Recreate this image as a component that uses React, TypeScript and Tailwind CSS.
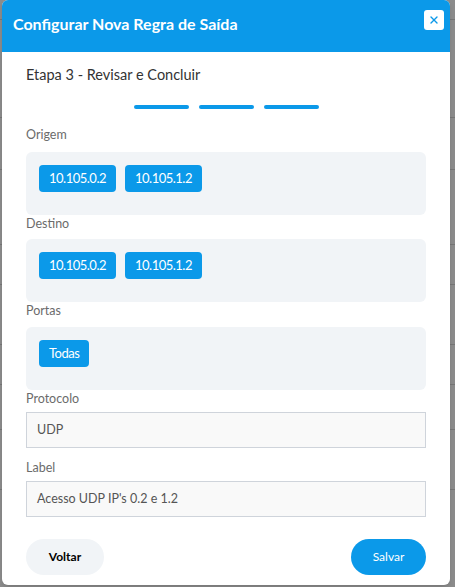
import { X } from 'lucide-react';

const font = { fontFamily: 'Lato, "Liberation Sans", sans-serif' };

function Chip({ children }: { children: React.ReactNode }) {
  return (
    <span className="flex h-[27px] items-center rounded-[4px] bg-[#0b99e9] px-[10px] text-[13px] tracking-[-0.5px] text-white">
      {children}
    </span>
  );
}

function ChipBox({ items }: { items: string[] }) {
  return (
    <div className="flex h-[63px] items-start gap-[9px] rounded-[6px] bg-[#f1f4f7] px-[13px] pt-[13px]">
      {items.map((it, i) => (
        <Chip key={i}>{it}</Chip>
      ))}
    </div>
  );
}

function Field({ value }: { value: string }) {
  return (
    <div className="flex h-[36px] items-center border border-[#cfd4db] bg-[#f9f9f9] px-[10px] text-[12.5px] text-[#555]">
      {value}
    </div>
  );
}

function FieldLabel({ children }: { children: React.ReactNode }) {
  return <div className="h-[18px] text-[12.5px] leading-[18px] text-[#6b6b6b]">{children}</div>;
}

// page behind the overlay, only a few table rows peek out at the edges
function BackgroundPage() {
  const rows = [20, 98, 52, 75, 40, 60, 40, 45, 60];
  return (
    <div className="flex h-full flex-col bg-white">
      {rows.map((h, i) => (
        <div key={i} className="border-b border-[#d5d5d5]" style={{ height: h }} />
      ))}
    </div>
  );
}

export default function App() {
  const ips = ['10.105.0.2', '10.105.1.2'];
  return (
    <div className="relative h-[587px] w-[455px] overflow-hidden" style={font}>
      <BackgroundPage />
      <div className="absolute inset-0 bg-[#1a1a1a]/50" />

      <div className="absolute left-[2px] top-0 flex h-[585px] w-[448px] flex-col overflow-hidden rounded-[6px] bg-white shadow-md">
        <div className="flex h-[52px] shrink-0 items-start justify-between bg-[#0b99e9] pl-[11px] pr-[6px] pt-[10px]">
          <h2 className="mt-[4px] text-[16px] font-bold leading-[20px] text-white">Configurar Nova Regra de Saída</h2>
          <button className="flex h-[20px] w-[20px] items-center justify-center rounded-[3px] bg-white">
            <X size={12} strokeWidth={2.75} className="text-[#0b99e9]" />
          </button>
        </div>

        <div className="flex flex-1 flex-col px-[24px]">
          <div className="mt-[13px] text-[14.5px] leading-[20px] text-[#333]">Etapa 3 - Revisar e Concluir</div>

          <div className="mt-[20px] flex justify-center gap-[10px]">
            <span className="h-[4px] w-[55px] rounded-full bg-[#0b99e9]" />
            <span className="h-[4px] w-[55px] rounded-full bg-[#0b99e9]" />
            <span className="h-[4px] w-[55px] rounded-full bg-[#0b99e9]" />
          </div>

          <div className="mt-[17px]">
            <FieldLabel>Origem</FieldLabel>
          </div>
          <div className="mt-[8px]">
            <ChipBox items={ips} />
          </div>

          <FieldLabel>Destino</FieldLabel>
          <div className="mt-[6px]">
            <ChipBox items={ips} />
          </div>

          <FieldLabel>Portas</FieldLabel>
          <div className="mt-[7px]">
            <ChipBox items={['Todas']} />
          </div>

          <FieldLabel>Protocolo</FieldLabel>
          <div className="mt-[4px]">
            <Field value="UDP" />
          </div>

          <div className="mt-[11px]">
            <FieldLabel>Label</FieldLabel>
          </div>
          <div className="mt-[4px]">
            <Field value="Acesso UDP IP's 0.2 e 1.2" />
          </div>

          <div className="mt-[22px] flex items-center justify-between">
            <button className="h-[36px] w-[78px] rounded-full bg-[#f1f4f7] text-[12px] font-bold text-black">
              Voltar
            </button>
            <button className="h-[36px] w-[75px] rounded-full bg-[#0b99e9] text-[12px] text-white">Salvar</button>
          </div>
        </div>
      </div>
    </div>
  );
}
